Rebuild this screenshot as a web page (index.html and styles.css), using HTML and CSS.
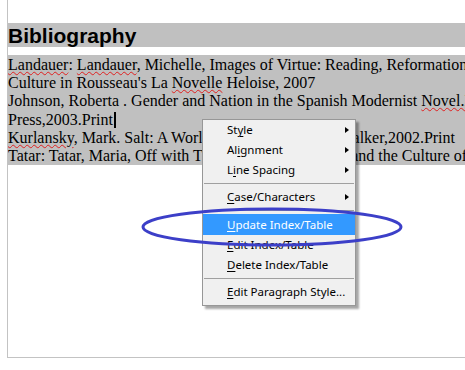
FILE: index.html
```
<!DOCTYPE html>
<html>
<head>
<meta charset="utf-8">
<link rel="stylesheet" href="styles.css">
</head>
<body>
<div class="page">
  <h1 class="heading">Bibliography</h1>
  <div class="entries">
    <div class="line"><span class="sp">Landauer</span>: <span class="sp">Landauer</span>, Michelle, Images of Virtue: Reading, Reformation and the Visualization of Virtue in</div>
    <div class="line">Culture in Rousseau's La <span class="sp">Novelle</span> Heloise, 2007</div>
    <div class="line">Johnson, Roberta . Gender and Nation in the Spanish Modernist <span class="sp">Novel.N</span>ashville: Vanderbilt University</div>
    <div class="line">Press,2003.Print<span class="caret"></span></div>
    <div class="line"><span class="sp">Kurlansky</span>, Mark. Salt: A World History.New York: Walker,2002.Print</div>
    <div class="line">Tatar: Tatar, Maria, Off with Their Heads:Fairy Tales and the Culture of Childhood</div>
  </div>
</div>

<div class="menu">
  <div class="item sub">St<u>y</u>le</div>
  <div class="item sub">Al<u>i</u>gnment</div>
  <div class="item sub">L<u>i</u>ne Spacing</div>
  <div class="sep"></div>
  <div class="item sub"><u>C</u>ase/Characters</div>
  <div class="sep"></div>
  <div class="item active"><u>U</u>pdate Index/Table</div>
  <div class="item"><u>E</u>dit Index/Table</div>
  <div class="item"><u>D</u>elete Index/Table</div>
  <div class="sep"></div>
  <div class="item"><u>E</u>dit Paragraph Style...</div>
</div>

<svg class="ring" width="465" height="370" viewBox="0 0 465 370">
  <ellipse cx="272" cy="227" rx="129" ry="18" fill="none" stroke="#3c3fc8" stroke-width="3"/>
</svg>
</body>
</html>
```
FILE: styles.css
```
html, body {
  margin: 0;
  padding: 0;
  background: #ffffff;
  width: 465px;
  height: 370px;
  overflow: hidden;
}
.page {
  margin-left: 7px;
  width: 458px;
  height: 358px;
  border-left: 1px solid #c3c3c3;
  border-bottom: 1px solid #c3c3c3;
  padding-top: 23px;
  box-sizing: border-box;
  overflow: hidden;
}
.heading {
  margin: 0;
  height: 24px;
  background: #c0c0c0;
  font-family: "Liberation Sans", Arial, sans-serif;
  font-weight: bold;
  font-size: 21px;
  line-height: 25px;
  color: #000;
  white-space: nowrap;
}
.entries {
  margin-top: 8px;
  padding-top: 1px;
  background: #c0c0c0;
  font-family: "Liberation Serif", "Times New Roman", serif;
  font-size: 16px;
  line-height: 18.2px;
  color: #000;
}
.line {
  white-space: nowrap;
}
.sp {
  text-decoration: underline wavy #e02020;
  text-decoration-thickness: 1px;
  text-underline-offset: 1px;
}
.caret {
  display: inline-block;
  width: 2px;
  height: 16px;
  background: #000;
  vertical-align: -3px;
  margin-left: 1px;
}
.menu {
  position: absolute;
  left: 202px;
  top: 119px;
  width: 154px;
  box-sizing: border-box;
  background: #f0f0f0;
  border: 1px solid #979797;
  padding: 0 0 3px;
  box-shadow: 3px 3px 2px rgba(0, 0, 0, 0.35);
  font-family: "Noto Sans", sans-serif;
  font-size: 11.5px;
  color: #000;
}
.item {
  position: relative;
  height: 20px;
  line-height: 20px;
  padding-left: 24px;
  white-space: nowrap;
}
.item u {
  text-decoration-thickness: 1px;
  text-underline-offset: 2px;
}
.item.sub::after {
  content: "";
  position: absolute;
  right: 6px;
  top: 7px;
  border-left: 4px solid #000;
  border-top: 3.5px solid transparent;
  border-bottom: 3.5px solid transparent;
}
.item.active {
  background: #3399ff;
  color: #fff;
  height: 21px;
  line-height: 21px;
}
.sep {
  height: 7px;
  position: relative;
}
.sep::before {
  content: "";
  position: absolute;
  left: 1px;
  right: 1px;
  top: 3px;
  height: 1px;
  background: #a0a0a0;
}
.ring {
  position: absolute;
  left: 0;
  top: 0;
  pointer-events: none;
}
```
